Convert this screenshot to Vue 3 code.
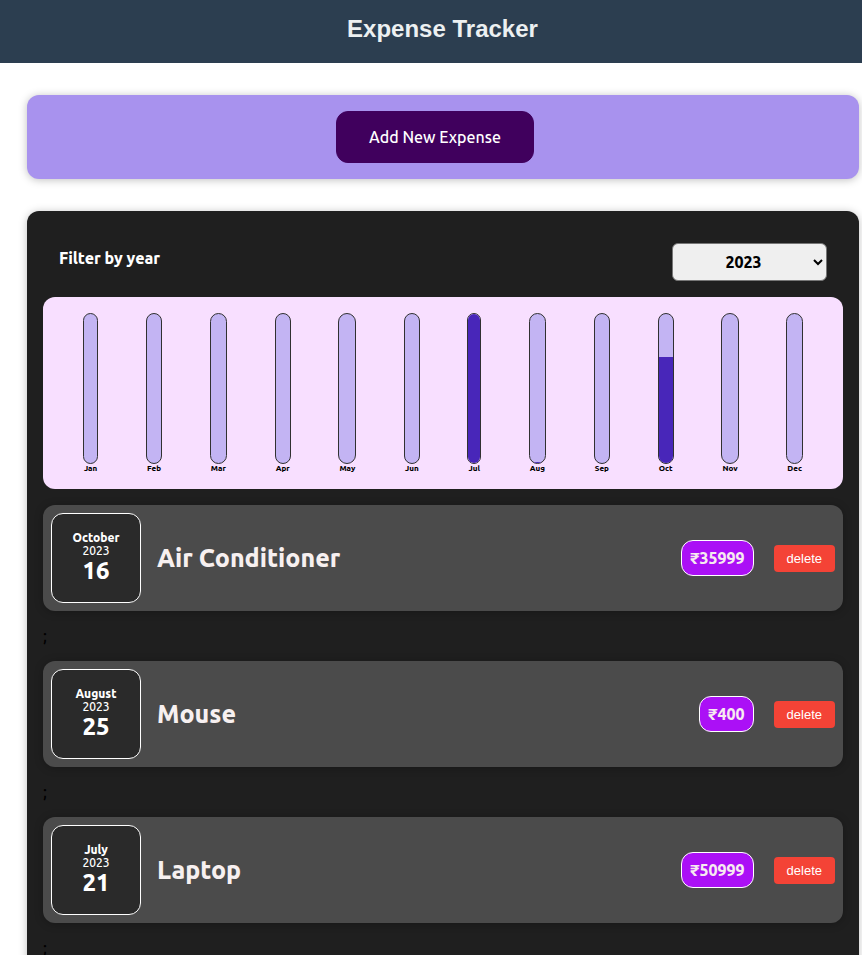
<script setup>
import { ref, computed } from 'vue'

const year = ref('2023')
const years = ['2021', '2022', '2023', '2024']
const expenses = ref([
  { id: 1, title: 'Air Conditioner', amount: 35999, month: 'October', year: '2023', day: 16 },
  { id: 2, title: 'Mouse', amount: 400, month: 'August', year: '2023', day: 25 },
  { id: 3, title: 'Laptop', amount: 50999, month: 'July', year: '2023', day: 21 },
])
const months = ['Jan', 'Feb', 'Mar', 'Apr', 'May', 'Jun', 'Jul', 'Aug', 'Sep', 'Oct', 'Nov', 'Dec']

const filtered = computed(() => expenses.value.filter((e) => e.year === year.value))
const bars = computed(() => {
  const totals = months.map((m) =>
    filtered.value.filter((e) => e.month.startsWith(m)).reduce((sum, e) => sum + e.amount, 0)
  )
  const max = Math.max(...totals, 1)
  return months.map((label, i) => ({ label, fill: Math.round((totals[i] / max) * 100) + '%' }))
})

function remove(id) {
  expenses.value = expenses.value.filter((e) => e.id !== id)
}
</script>

<template>
  <header class="header">
    <h1>Expense Tracker</h1>
  </header>
  <main class="page">
    <section class="new-expense">
      <button type="button" class="add">Add New Expense</button>
    </section>
    <section class="expenses">
      <div class="filter">
        <label for="year">Filter by year</label>
        <select id="year" v-model="year">
          <option v-for="y in years" :key="y" :value="y">{{ y }}</option>
        </select>
      </div>
      <div class="chart">
        <div v-for="bar in bars" :key="bar.label" class="month">
          <div class="bar"><div class="fill" :style="{ height: bar.fill }"></div></div>
          <span class="month-label">{{ bar.label }}</span>
        </div>
      </div>
      <ul class="list">
        <li v-for="e in filtered" :key="e.id">
          <article class="item">
            <div class="date">
              <span class="date-month">{{ e.month }}</span>
              <span class="date-year">{{ e.year }}</span>
              <span class="date-day">{{ e.day }}</span>
            </div>
            <h2>{{ e.title }}</h2>
            <span class="price">₹{{ e.amount }}</span>
            <button type="button" class="delete" @click="remove(e.id)">delete</button>
          </article>
          <span class="separator">;</span>
        </li>
      </ul>
    </section>
  </main>
</template>

<style>
body {
  margin: 0;
  background: #fff;
  font-family: Ubuntu, "Noto Sans", sans-serif;
}
</style>

<style scoped>
.header {
  padding: 14px 0 19px 23px;
  background: #2c3e50;
  text-align: center;
}
.header h1 {
  margin: 0;
  color: #ecf0f1;
  font: bold 24px/30px "Liberation Sans", Arial, sans-serif;
}
.page {
  display: flex;
  flex-direction: column;
  gap: 32px;
  padding: 32px 3px 32px 27px;
  font-weight: 500;
}
.new-expense {
  display: flex;
  justify-content: center;
  padding: 16px 32px 16px 16px;
  border-radius: 12px;
  background: #a892ee;
  box-shadow: 0 1px 8px rgba(0, 0, 0, 0.25);
}
.add {
  padding: 0 32px;
  border: 1px solid #40005d;
  border-radius: 12px;
  background: #40005d;
  color: #fff;
  font-family: inherit;
  font-size: 16px;
  font-weight: inherit;
  line-height: 50px;
}
.expenses {
  padding: 32px 16px 16px;
  border-radius: 12px;
  background: #1f1f1f;
  box-shadow: 0 1px 8px rgba(0, 0, 0, 0.25);
}
.filter {
  display: flex;
  justify-content: space-between;
  align-items: flex-start;
  padding: 0 16px;
  color: #fff;
  font-size: 16px;
  font-weight: 800;
}
.filter label {
  line-height: 30px;
}
.filter select {
  width: 155px;
  height: 38px;
  border: 1px solid #767676;
  border-radius: 6px;
  background-color: #efefef;
  color: #000;
  font: inherit;
  text-align: center;
}
.chart {
  display: flex;
  justify-content: space-around;
  margin: 16px 0;
  padding: 16px;
  border-radius: 12px;
  background: #f8dfff;
}
.month {
  display: flex;
  flex-direction: column;
  align-items: center;
}
.bar {
  box-sizing: border-box;
  display: flex;
  flex-direction: column;
  justify-content: flex-end;
  width: 100%;
  height: 151px;
  overflow: hidden;
  border: 1px solid #313131;
  border-radius: 12px;
  background: #c3b4f3;
}
.fill {
  background: #4826b9;
}
.month-label {
  padding: 0 1px;
  font-size: 8px;
  font-weight: 800;
  line-height: 9px;
}
.list {
  margin: 0;
  padding: 0;
  list-style: none;
}
.item {
  display: flex;
  align-items: center;
  padding: 8px;
  border-radius: 12px;
  background: #4b4b4b;
  box-shadow: 0 1px 8px rgba(0, 0, 0, 0.25);
}
.date {
  box-sizing: border-box;
  display: flex;
  flex-direction: column;
  align-items: center;
  justify-content: center;
  width: 90px;
  height: 90px;
  border: 1px solid #fff;
  border-radius: 12px;
  background: #2a2a2a;
  color: #fff;
  font-size: 12px;
  line-height: 13px;
}
.date-month {
  font-weight: 800;
}
.date-day {
  font-size: 24px;
  font-weight: 800;
  line-height: 28px;
}
.item h2 {
  flex: 1;
  margin: 0 16px;
  color: #f7f0f0;
  font-size: 25px;
  font-weight: 800;
  line-height: 30px;
}
.price {
  padding: 0 8px;
  border: 1px solid #fff;
  border-radius: 12px;
  background: #ab10f6;
  color: #f7eaf0;
  font-size: 16px;
  font-weight: 800;
  line-height: 34px;
}
.delete {
  margin-left: 20px;
  padding: 6px 13px;
  border: 0;
  border-radius: 4px;
  background: #f44336;
  color: #fff;
  font: 13px/15px "Liberation Sans", Arial, sans-serif;
}
.separator {
  display: block;
  padding: 16px 0;
  color: #000;
  font-size: 16px;
  line-height: 18px;
}
</style>
